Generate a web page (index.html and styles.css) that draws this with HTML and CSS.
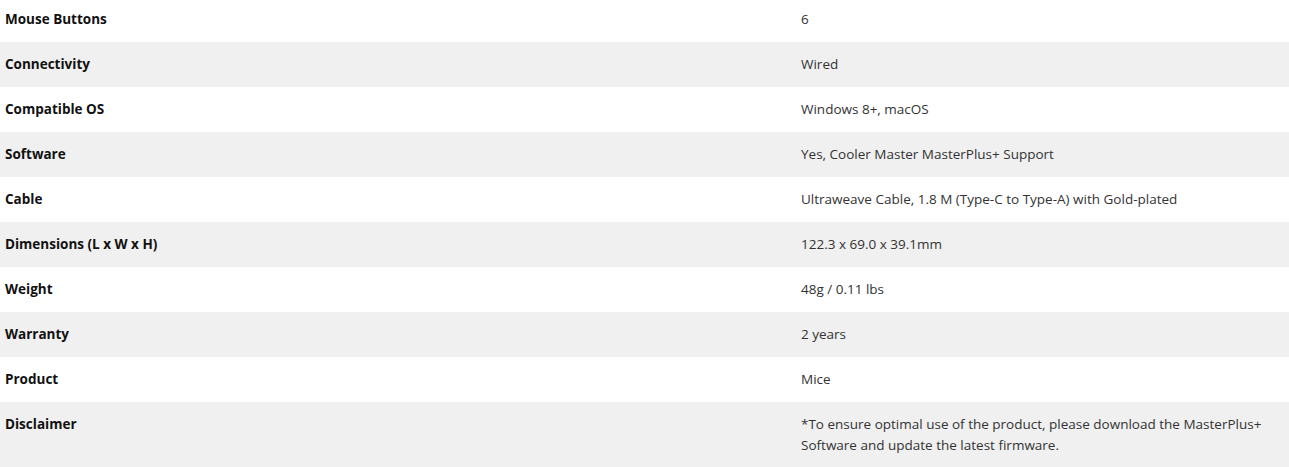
FILE: index.html
```html
<!DOCTYPE html>
<html lang="en">
<head>
<meta charset="utf-8">
<title>Specifications</title>
<link rel="stylesheet" href="styles.css">
</head>
<body>
<table class="specs">
  <tbody>
    <tr><th>Mouse Buttons</th><td>6</td></tr>
    <tr><th>Connectivity</th><td>Wired</td></tr>
    <tr><th>Compatible OS</th><td>Windows 8+, macOS</td></tr>
    <tr><th>Software</th><td>Yes, Cooler Master MasterPlus+ Support</td></tr>
    <tr><th>Cable</th><td>Ultraweave Cable, 1.8 M (Type-C to Type-A) with Gold-plated</td></tr>
    <tr><th>Dimensions (L x W x H)</th><td>122.3 x 69.0 x 39.1mm</td></tr>
    <tr><th>Weight</th><td>48g / 0.11 lbs</td></tr>
    <tr><th>Warranty</th><td>2 years</td></tr>
    <tr><th>Product</th><td>Mice</td></tr>
    <tr><th>Disclaimer</th><td>*To ensure optimal use of the product, please download the MasterPlus+<br>Software and update the latest firmware.</td></tr>
  </tbody>
</table>
</body>
</html>
```
FILE: styles.css
```css
html, body {
  margin: 0;
  padding: 0;
  background: #fff;
}
body {
  font-family: "Open Sans", "Liberation Sans", sans-serif;
  font-size: 13.5px;
  line-height: 21px;
  color: #222;
  overflow: hidden;
}
.specs {
  width: 100%;
  border-collapse: collapse;
  margin-top: -3px;
}
.specs tr:nth-child(even) {
  background: #f0f0f0;
}
.specs th,
.specs td {
  padding: 12px 5px;
  text-align: left;
  vertical-align: top;
}
.specs th {
  width: 786px;
  font-weight: 700;
  color: #111;
}
.specs td {
  font-weight: 400;
  color: #333;
}
```
